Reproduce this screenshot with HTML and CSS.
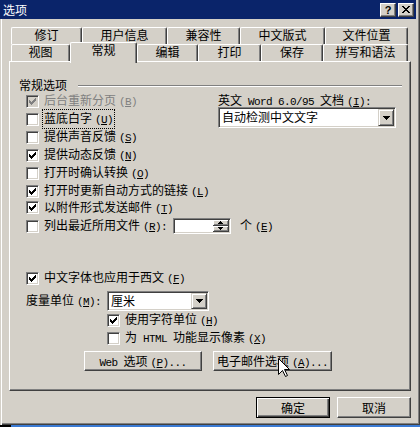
FILE: index.html
```html
<!DOCTYPE HTML>
<html>

<head>
    <meta charset="utf-8">

    <link rel="stylesheet" href="styles.css">

</head>

<body>

<div class="window">

    <div class="titlebar">
        <span class="title">选项</span>
        <div class="title-buttons">
            <span class="title-btn">?</span>
            <span class="title-btn">
                <svg width="8" height="7" viewBox="0 0 8 7"><path d="M0 0h2v1H0z M6 0h2v1H6z M1 1h2v1H1z M5 1h2v1H5z M2 2h4v1H2z M3 3h2v1H3z M2 4h4v1H2z M1 5h2v1H1z M5 5h2v1H5z M0 6h2v1H0z M6 6h2v1H6z" fill="#000"/></svg>
            </span>
        </div>
    </div>

    <div class="main">

        <div class="tabs">
            <div class="tab-row">
                <div class="tab t-revise">修订</div>
                <div class="tab t-user">用户信息</div>
                <div class="tab t-compat">兼容性</div>
                <div class="tab t-layout">中文版式</div>
                <div class="tab t-files">文件位置</div>
            </div>
            <div class="tab-row">
                <div class="tab t-view">视图</div>
                <div class="tab t-general active">常规</div>
                <div class="tab t-edit">编辑</div>
                <div class="tab t-print">打印</div>
                <div class="tab t-save">保存</div>
                <div class="tab t-spell">拼写和语法</div>
            </div>
        </div>

        <div class="panel">

            <div class="group-title"><span>常规选项</span><span class="rule"></span></div>

            <div class="general">
                <div class="checks">
                    <div class="row disabled">
                        <span class="box checked"><svg width="7" height="7" viewBox="0 0 7 7"><path d="M6 0h1v1H6z M5 1h2v1H5z M0 2h1v1H0z M4 2h3v1H4z M0 3h2v1H0z M3 3h3v1H3z M0 4h5v1H0z M1 5h3v1H1z M2 6h1v1H2z"/></svg></span>
                        <span class="label">后台重新分页<span class="key">(<u>B</u>)</span></span>
                    </div>
                    <div class="row">
                        <span class="box"></span>
                        <span class="label focus">蓝底白字<span class="key">(<u>U</u>)</span></span>
                    </div>
                    <div class="row">
                        <span class="box"></span>
                        <span class="label">提供声音反馈<span class="key">(<u>S</u>)</span></span>
                    </div>
                    <div class="row">
                        <span class="box checked"><svg width="7" height="7" viewBox="0 0 7 7"><path d="M6 0h1v1H6z M5 1h2v1H5z M0 2h1v1H0z M4 2h3v1H4z M0 3h2v1H0z M3 3h3v1H3z M0 4h5v1H0z M1 5h3v1H1z M2 6h1v1H2z"/></svg></span>
                        <span class="label">提供动态反馈<span class="key">(<u>N</u>)</span></span>
                    </div>
                    <div class="row">
                        <span class="box"></span>
                        <span class="label">打开时确认转换<span class="key">(<u>O</u>)</span></span>
                    </div>
                    <div class="row">
                        <span class="box checked"><svg width="7" height="7" viewBox="0 0 7 7"><path d="M6 0h1v1H6z M5 1h2v1H5z M0 2h1v1H0z M4 2h3v1H4z M0 3h2v1H0z M3 3h3v1H3z M0 4h5v1H0z M1 5h3v1H1z M2 6h1v1H2z"/></svg></span>
                        <span class="label">打开时更新自动方式的链接<span class="key">(<u>L</u>)</span></span>
                    </div>
                    <div class="row tight">
                        <span class="box checked"><svg width="7" height="7" viewBox="0 0 7 7"><path d="M6 0h1v1H6z M5 1h2v1H5z M0 2h1v1H0z M4 2h3v1H4z M0 3h2v1H0z M3 3h3v1H3z M0 4h5v1H0z M1 5h3v1H1z M2 6h1v1H2z"/></svg></span>
                        <span class="label">以附件形式发送邮件<span class="key">(<u>T</u>)</span></span>
                    </div>
                    <div class="row tall">
                        <span class="box"></span>
                        <span class="label">列出最近所用文件<span class="key">(<u>R</u>):</span></span>
                        <span class="spin">
                            <span class="spin-btns">
                                <span><svg width="5" height="3" viewBox="0 0 5 3"><path d="M2 0h1v1H2z M1 1h3v1H1z M0 2h5v1H0z"/></svg></span>
                                <span><svg width="5" height="3" viewBox="0 0 5 3"><path d="M0 0h5v1H0z M1 1h3v1H1z M2 2h1v1H2z"/></svg></span>
                            </span>
                        </span>
                        <span class="unit">个<span class="key">(<u>E</u>)</span></span>
                    </div>
                </div>

                <div class="compat">
                    <div class="field-label">英文<span class="lat"> Word 6.0/95 </span>文档<span class="key">(<u>I</u>):</span></div>
                    <div class="combo wide">
                        <span class="combo-text">自动检测中文文字</span>
                        <span class="drop"><svg width="7" height="4" viewBox="0 0 7 4"><path d="M0 0h7v1H0z M1 1h5v1H1z M2 2h3v1H2z M3 3h1v1H3z"/></svg></span>
                    </div>
                </div>
            </div>

            <div class="lower">
                <div class="row short">
                    <span class="box checked"><svg width="7" height="7" viewBox="0 0 7 7"><path d="M6 0h1v1H6z M5 1h2v1H5z M0 2h1v1H0z M4 2h3v1H4z M0 3h2v1H0z M3 3h3v1H3z M0 4h5v1H0z M1 5h3v1H1z M2 6h1v1H2z"/></svg></span>
                    <span class="label">中文字体也应用于西文<span class="key">(<u>F</u>)</span></span>
                </div>
                <div class="measure">
                    <span class="measure-label">度量单位<span class="key">(<u>M</u>):</span></span>
                    <div class="combo units">
                        <span class="combo-text">厘米</span>
                        <span class="drop"><svg width="7" height="4" viewBox="0 0 7 4"><path d="M0 0h7v1H0z M1 1h5v1H1z M2 2h3v1H2z M3 3h1v1H3z"/></svg></span>
                    </div>
                </div>
                <div class="row indent">
                    <span class="box checked"><svg width="7" height="7" viewBox="0 0 7 7"><path d="M6 0h1v1H6z M5 1h2v1H5z M0 2h1v1H0z M4 2h3v1H4z M0 3h2v1H0z M3 3h3v1H3z M0 4h5v1H0z M1 5h3v1H1z M2 6h1v1H2z"/></svg></span>
                    <span class="label">使用字符单位<span class="key">(<u>H</u>)</span></span>
                </div>
                <div class="row indent">
                    <span class="box"></span>
                    <span class="label">为<span class="lat"> HTML </span>功能显示像素<span class="key">(<u>X</u>)</span></span>
                </div>
                <div class="web-buttons">
                    <button class="btn web"><span class="lat">Web </span>选项<span class="key">(<u>P</u>)...</span></button>
                    <button class="btn mail">电子邮件选项<span class="key">(<u>A</u>)...</span></button>
                </div>
            </div>

        </div>

        <div class="actions">
            <button class="btn default">确定</button>
            <button class="btn">取消</button>
        </div>

    </div>
</div>

<svg class="cursor" width="12" height="20" viewBox="0 0 12 20"><path d="M0.5 0.5 L0.5 16.5 L4.5 12.5 L7.5 18.5 L9.5 17.5 L6.5 11.5 L11.5 11.5 Z" fill="#fff" stroke="#000"/></svg>

</body>

</html>
```

FILE: styles.css
```css
/* классическое окно диалога */

* {
    box-sizing: border-box;
}

body {
    margin: 0;
    width: 420px;
    height: 427px;
    position: relative;
    overflow: hidden;
    background: linear-gradient(to right, #000 11px, #3a7bd5 11px);
    font-family: "Noto Sans CJK SC", sans-serif;
    font-size: 12px;
    line-height: 14px;
    color: #000;
}

.window {
    width: 420px;
    height: 425px;
    background-color: #d4d0c8;
    box-shadow: inset 1px 0 #d4d0c8, inset 2px 0 #fff, inset -1px -1px #404040, inset -2px -2px #808080;
}

.titlebar {
    width: 416px;
    height: 19px;
    padding: 0 2px 0 3px;
    display: flex;
    align-items: center;
    justify-content: space-between;
    background-color: #0a246a;
    color: #fff;
}

.title-buttons {
    display: flex;
    gap: 2px;
}

.title-btn {
    width: 16px;
    height: 14px;
    display: flex;
    align-items: center;
    justify-content: center;
    background-color: #d4d0c8;
    border: 1px solid;
    border-color: #fff #404040 #404040 #fff;
    box-shadow: inset -1px -1px #808080;
    color: #000;
    font: bold 11px/12px "Liberation Sans", sans-serif;
}

.main {
    padding: 8px 0 0 9px;
}

/* вкладки */

.tabs {
    margin-left: 2px;
}

.tab-row {
    display: flex;
    height: 17px;
}

.tab {
    height: 17px;
    flex: none;
    text-align: center;
    line-height: 14px;
    white-space: nowrap;
    background-color: #d4d0c8;
    border-top: 1px solid #fff;
    border-left: 1px solid #fff;
    border-right: 1px solid #404040;
    box-shadow: inset -1px 0 #808080;
    border-radius: 2px 2px 0 0;
}

.tab.active {
    height: 21px;
    margin-top: -2px;
    position: relative;
    z-index: 1;
}

.t-revise { width: 71px; }
.t-user { width: 85px; }
.t-compat { width: 73px; }
.t-layout { width: 85px; }
.t-files { width: 83px; }

.t-view { width: 59px; }
.t-general { width: 67px; }
.t-edit { width: 61px; }
.t-print { width: 63px; }
.t-save { width: 62px; }
.t-spell { width: 85px; }

/* панель */

.panel {
    width: 402px;
    height: 330px;
    padding: 15px 8px 0 9px;
    border: 1px solid;
    border-color: #fff #404040 #404040 #fff;
    box-shadow: inset -1px -1px #808080;
}

.group-title {
    display: flex;
    height: 15px;
    line-height: 15px;
}

.rule {
    flex: 1;
    height: 2px;
    margin: 8px 0 0 11px;
    border-top: 1px solid #808080;
    border-bottom: 1px solid #fff;
}

.general {
    display: grid;
    grid-template-columns: 192px 1fr;
    margin-left: 7px;
}

.row {
    display: flex;
    align-items: center;
    height: 18px;
    white-space: nowrap;
}

.row > * {
    flex: none;
}

.row.tight {
    height: 15px;
}

.row.tall {
    height: 22px;
}

.row.short {
    height: 16px;
}

.box {
    width: 13px;
    height: 13px;
    margin-right: 4px;
    padding: 2px;
    background-color: #fff;
    border: 1px solid;
    border-color: #808080 #fff #fff #808080;
    box-shadow: inset 1px 1px #404040, inset -1px -1px #d4d0c8;
}

.box svg {
    display: block;
    fill: #000;
}

.disabled {
    color: #808080;
}

.disabled .box {
    background-color: #d4d0c8;
}

.disabled .box svg {
    fill: #808080;
}

.label {
    padding: 1px 1px;
}

.focus {
    outline: 1px dotted #000;
}

.key,
.lat {
    font-family: "Liberation Mono", monospace;
    font-size: 11px;
    letter-spacing: -0.6px;
    white-space: pre;
}

.key {
    margin-left: 3px;
}

.spin {
    width: 58px;
    height: 16px;
    margin-left: 5px;
    padding: 1px;
    display: flex;
    justify-content: flex-end;
    background-color: #fff;
    border: 1px solid;
    border-color: #808080 #fff #fff #808080;
    box-shadow: inset 1px 1px #404040, inset -1px -1px #d4d0c8;
}

.spin-btns {
    width: 16px;
    display: flex;
    flex-direction: column;
}

.spin-btns span {
    flex: 1;
    display: flex;
    align-items: center;
    justify-content: center;
    background-color: #d4d0c8;
    border-right: 1px solid #404040;
    border-bottom: 1px solid #404040;
    box-shadow: inset 1px 1px #fff, inset -1px -1px #808080;
}

.spin-btns svg {
    display: block;
}

.unit {
    margin-left: 9px;
}

.field-label {
    height: 15px;
    line-height: 15px;
    white-space: nowrap;
}

.combo {
    display: flex;
    height: 21px;
    padding: 1px;
    background-color: #fff;
    border: 1px solid;
    border-color: #808080 #fff #fff #808080;
    box-shadow: inset 1px 1px #404040, inset -1px -1px #d4d0c8;
}

.combo.wide {
    width: 178px;
}

.combo.units {
    width: 102px;
    height: 20px;
}

.combo-text {
    flex: 1;
    padding-left: 2px;
    line-height: 16px;
    white-space: nowrap;
}

.drop {
    width: 16px;
    display: flex;
    align-items: center;
    justify-content: center;
    background-color: #d4d0c8;
    border: 1px solid;
    border-color: #d4d0c8 #404040 #404040 #d4d0c8;
    box-shadow: inset 1px 1px #fff, inset -1px -1px #808080;
}

.drop svg {
    display: block;
}

/* нижняя часть */

.lower {
    margin: 33px 0 0 7px;
}

.measure {
    display: flex;
    align-items: center;
    height: 20px;
    margin-top: 5px;
}

.measure-label {
    width: 81px;
    white-space: nowrap;
}

.indent {
    margin-left: 81px;
}

.web-buttons {
    display: flex;
    gap: 11px;
    margin: 4px 0 0 58px;
}

.btn {
    display: block;
    height: 20px;
    padding: 0;
    text-align: center;
    font: inherit;
    line-height: 17px;
    color: #000;
    white-space: nowrap;
    background-color: #d4d0c8;
    border: 1px solid;
    border-color: #fff #404040 #404040 #fff;
    box-shadow: inset -1px -1px #808080;
}

.btn.web {
    width: 118px;
}

.btn.mail {
    width: 119px;
}

.actions {
    width: 402px;
    margin-top: 6px;
    display: flex;
    justify-content: flex-end;
    gap: 7px;
}

.actions .btn {
    width: 74px;
    height: 21px;
}

.btn.default {
    border-color: #000;
    box-shadow: inset 1px 1px #fff, inset -1px -1px #404040, inset -2px -2px #808080;
}

.cursor {
    position: absolute;
    left: 278px;
    top: 358px;
}
```
